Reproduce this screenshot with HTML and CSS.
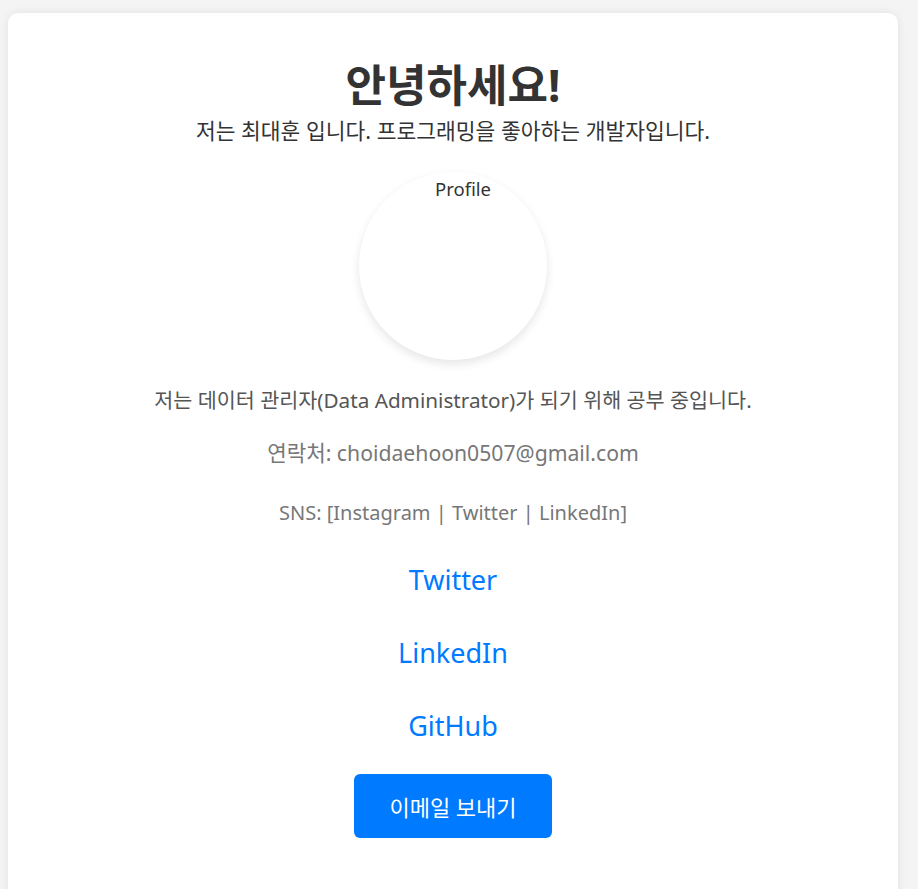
FILE: index.html
```html
<!DOCTYPE html>
<html lang="ko">
<head>
<meta charset="utf-8">
<title>안녕하세요!</title>
<link rel="stylesheet" href="styles.css">
</head>
<body>
<main class="card">
  <h1 class="title">안녕하세요!</h1>
  <p class="intro">저는 최대훈 입니다. 프로그래밍을 좋아하는 개발자입니다.</p>
  <div class="avatar"><span class="avatar-alt">Profile</span></div>
  <p class="goal">저는 데이터 관리자(Data Administrator)가 되기 위해 공부 중입니다.</p>
  <p class="contact">연락처: choidaehoon0507@gmail.com</p>
  <p class="sns">SNS: [Instagram | Twitter | LinkedIn]</p>
  <a class="link" href="#">Twitter</a>
  <a class="link" href="#">LinkedIn</a>
  <a class="link" href="#">GitHub</a>
  <button class="mail-btn" type="button">이메일 보내기</button>
</main>
</body>
</html>
```
FILE: styles.css
```css
html, body {
  margin: 0;
  padding: 0;
}
body {
  background: #f4f4f4;
  font-family: "Noto Sans", "Noto Sans CJK KR", sans-serif;
  color: #333;
  padding: 13px 20px 0 8px;
}
.card {
  background: #fff;
  border-radius: 10px;
  box-shadow: 0 0 10px rgba(0, 0, 0, 0.08);
  width: 890px;
  min-height: 920px;
  box-sizing: border-box;
  padding: 46px 20px 40px;
  display: flex;
  flex-direction: column;
  align-items: center;
  text-align: center;
}
.title {
  margin: 0;
  font-size: 44px;
  line-height: 52px;
  font-weight: 700;
  color: #333;
}
.intro {
  margin: 6px 0 0;
  font-size: 21.5px;
  line-height: 28px;
  color: #333;
}
.avatar {
  margin-top: 27px;
  width: 188px;
  height: 188px;
  border-radius: 50%;
  background: #fff;
  box-shadow: 0 4px 10px rgba(0, 0, 0, 0.1);
  display: flex;
  justify-content: center;
}
.avatar-alt {
  font-size: 18.5px;
  line-height: 24px;
  margin-top: 5px;
  margin-left: 20px;
  color: #333;
}
.goal {
  margin: 26px 0 0;
  font-size: 20.7px;
  line-height: 28px;
  color: #555;
}
.contact {
  margin: 25px 0 0;
  font-size: 21.2px;
  line-height: 28px;
  color: #777;
}
.sns {
  margin: 32px 0 0;
  font-size: 20px;
  line-height: 28px;
  color: #777;
}
.link {
  display: block;
  margin-top: 34px;
  font-size: 27px;
  line-height: 37px;
  color: #007bff;
  text-decoration: none;
}
.link + .link {
  margin-top: 36px;
}
.mail-btn {
  margin-top: 30px;
  width: 198px;
  height: 64px;
  border: none;
  border-radius: 6px;
  background: #007bff;
  color: #fff;
  font-family: "Noto Sans", "Noto Sans CJK KR", sans-serif;
  font-size: 22px;
  cursor: pointer;
}
```
